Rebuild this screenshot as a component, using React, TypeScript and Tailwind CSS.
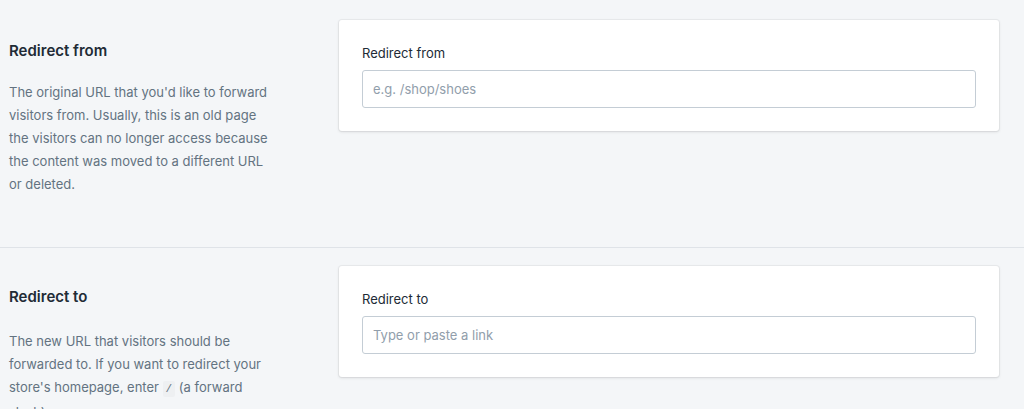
export default function App() {
    return (
        <div className="min-h-screen bg-[#f4f6f8] text-[#212b36]" style={{ fontFamily: 'Inter, "Noto Sans", "Liberation Sans", sans-serif' }}>
            <section className="flex pt-5 pb-[51px] border-b border-[#dfe3e8]">
                <div className="w-[339px] shrink-0 pl-[9px] pt-[21px]">
                    <h2 className="text-[15px] leading-5 font-semibold">Redirect from</h2>
                    <p className="mt-5 w-[270px] text-[13px] leading-[23px] text-[#637381]">
                        The original URL that you'd like to forward visitors from. Usually, this is an old page the visitors can no longer access because the content was moved to a different URL or deleted.
                    </p>
                </div>
                <div className="w-[660px] h-fit bg-white rounded-[3px] p-[23px] shadow-[0_0_0_1px_rgba(63,63,68,0.05),0_1px_3px_0_rgba(63,63,68,0.15)]">
                    <label className="block text-[13px] leading-5 text-[#212b36]">Redirect from</label>
                    <input
                        className="mt-[7px] block w-full h-[38px] rounded-[3px] border border-[#c4cdd5] px-[10px] text-[13px] outline-none placeholder:text-[#919eab]"
                        placeholder="e.g. /shop/shoes"
                    />
                </div>
            </section>
            <section className="flex pt-[18px] pb-10">
                <div className="w-[339px] shrink-0 pl-[9px] pt-[21px]">
                    <h2 className="text-[15px] leading-5 font-semibold">Redirect to</h2>
                    <p className="mt-[23px] w-[270px] text-[13px] leading-[23px] text-[#637381]">
                        The new URL that visitors should be forwarded to. If you want to redirect your store's homepage, enter{' '}
                        <code className="bg-[#eef0f2] px-[3px] py-[2px] text-[11px] text-[#637381] rounded-[2px]">/</code> (a forward slash).
                    </p>
                </div>
                <div className="w-[660px] h-fit bg-white rounded-[3px] p-[23px] shadow-[0_0_0_1px_rgba(63,63,68,0.05),0_1px_3px_0_rgba(63,63,68,0.15)]">
                    <label className="block text-[13px] leading-5 text-[#212b36]">Redirect to</label>
                    <input
                        className="mt-[7px] block w-full h-[38px] rounded-[3px] border border-[#c4cdd5] px-[10px] text-[13px] outline-none placeholder:text-[#919eab]"
                        placeholder="Type or paste a link"
                    />
                </div>
            </section>
        </div>
    );
}
